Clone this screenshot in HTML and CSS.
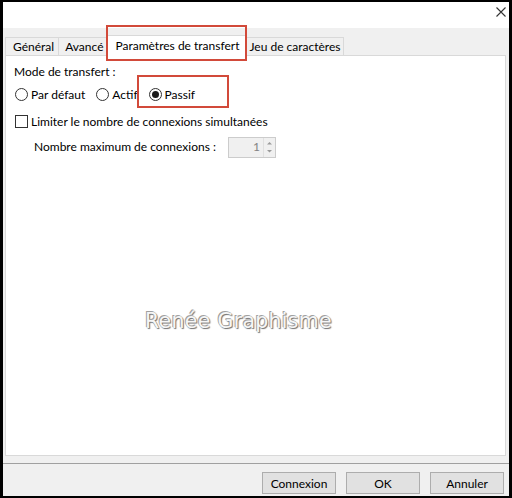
FILE: index.html
```html
<!DOCTYPE html>
<html lang="fr">
<head>
<meta charset="utf-8">
<title>Paramètres de transfert</title>
<link rel="stylesheet" href="styles.css">
</head>
<body>
<div class="window">
  <div class="titlebar">
    <svg class="close" width="10" height="10" viewBox="0 0 10 10"><path d="M0.5 0.5 L9.5 9.5 M9.5 0.5 L0.5 9.5" stroke="#333" stroke-width="1.1" fill="none"/></svg>
  </div>
  <div class="main">
    <div class="tabs">
      <div class="tab tab-first">Général</div>
      <div class="tab tab-mid">Avancé</div>
      <div class="tab tab-active">Paramètres de transfert</div>
      <div class="tab tab-last">Jeu de caractères</div>
    </div>
    <div class="panel">
      <div class="label">Mode de transfert :</div>
      <div class="radios">
        <label class="radio"><span class="circle"></span>Par défaut</label>
        <label class="radio"><span class="circle"></span>Actif</label>
        <label class="radio"><span class="circle checked"></span>Passif</label>
      </div>
      <label class="check"><span class="box"></span>Limiter le nombre de connexions simultanées</label>
      <div class="maxrow">
        <span>Nombre maximum de connexions :</span>
        <div class="spin">
          <span class="spin-val">1</span>
          <span class="spin-btns">
            <svg width="11" height="18" viewBox="0 0 11 18"><path d="M3 6.5 L5.5 4 L8 6.5 Z" fill="#9a9a9a"/><path d="M3 12 L5.5 14.5 L8 12 Z" fill="#9a9a9a"/></svg>
          </span>
        </div>
      </div>
      <div class="watermark">Renée Graphisme</div>
    </div>
  </div>
  <div class="footer">
    <button class="btn">Connexion</button>
    <button class="btn">OK</button>
    <button class="btn">Annuler</button>
  </div>
  <div class="mark mark-tab"></div>
  <div class="mark mark-radio"></div>
</div>
</body>
</html>
```
FILE: styles.css
```css
* { box-sizing: border-box; }
html, body { margin: 0; padding: 0; background: #000; }
body { font-family: Lato, "Noto Sans", sans-serif; font-size: 12px; color: #000; }

.window {
  position: relative;
  width: 512px;
  height: 498px;
  border-style: solid;
  border-color: #000;
  border-width: 2px 3px 2px 3px;
  background: #f0f0f0;
  display: flex;
  flex-direction: column;
}

.titlebar {
  height: 26px;
  background: #fff;
  display: flex;
  justify-content: flex-end;
  align-items: flex-start;
  padding: 5px 3px 0 0;
  flex: none;
}

.main {
  flex: 1;
  display: flex;
  flex-direction: column;
  padding: 7px 3px 7px 2px;
}

.tabs {
  display: flex;
  height: 20px;
  flex: none;
}

.tab {
  height: 19px;
  margin-top: 2px;
  padding: 0 4px 0 5px;
  border: 1px solid #d9d9d9;
  border-bottom: none;
  border-left: none;
  background: #f0f0f0;
  line-height: 17px;
  white-space: nowrap;
}
.tab-first { border-left: 1px solid #d9d9d9; padding-left: 7px; }
.tab-mid { padding: 0 5px 0 6px; }
.tab-last { padding: 0 3px 0 4px; }

.tab-active {
  position: relative;
  z-index: 2;
  margin: 0 -2px;
  height: 22px;
  padding: 0 7px 0 7px;
  border-left: 1px solid #d9d9d9;
  background: #fff;
  line-height: 20px;
}

.panel {
  position: relative;
  flex: 1;
  background: #fff;
  border: 1px solid #d9d9d9;
  padding: 8px 8px 0 8px;
}

.label { line-height: 16px; }

.radios {
  display: flex;
  margin-top: 6px;
  height: 16px;
  align-items: center;
}
.radio {
  display: flex;
  align-items: center;
  margin-right: 10px;
  white-space: nowrap;
}
.circle {
  width: 13px;
  height: 13px;
  border: 1px solid #333;
  border-radius: 50%;
  margin: 0 3px 0 1px;
  display: flex;
  align-items: center;
  justify-content: center;
}
.circle.checked::after {
  content: "";
  width: 7px;
  height: 7px;
  border-radius: 50%;
  background: #1a1a1a;
}

.check {
  display: flex;
  align-items: center;
  height: 16px;
  margin-top: 11px;
}
.box {
  width: 13px;
  height: 13px;
  border: 1px solid #333;
  margin: 0 3px 0 1px;
}

.maxrow {
  display: flex;
  align-items: center;
  margin-top: 8px;
  padding-left: 20px;
  gap: 12px;
  height: 20px;
}
.maxrow span:first-child { position: relative; top: -1px; }

.spin {
  width: 48px;
  height: 21px;
  border: 1px solid #cccccc;
  background: #f0f0f0;
  display: flex;
  align-items: center;
  justify-content: flex-end;
}
.spin-val { color: #838383; padding-right: 3px; }
.spin-btns {
  width: 12px;
  height: 19px;
  border-left: 1px solid #e0e0e0;
  display: flex;
  align-items: center;
}

.watermark {
  position: absolute;
  left: 139px;
  top: 253px;
  white-space: nowrap;
  font-family: "DejaVu Sans", Verdana, sans-serif;
  font-size: 20.5px;
  color: #f6f6f6;
  text-shadow: -1px -1px 0 #a0a0a0, 1px 1px 1px #6f6f6f, 0 0 1px #888;
  letter-spacing: 0.3px;
}

.footer {
  height: 33px;
  flex: none;
  border-top: 1px solid #a0a0a0;
  display: flex;
  justify-content: flex-end;
  gap: 10px;
  padding: 8px 5px 0 0;
}

.btn {
  width: 74px;
  height: 22px;
  border: 1px solid #adadad;
  background: #e1e1e1;
  font-family: Lato, "Noto Sans", sans-serif;
  font-size: 12px;
  color: #000;
  padding: 0;
}

.mark {
  position: absolute;
  border: 2px solid #d24a3a;
  z-index: 5;
}
.mark-tab { left: 103px; top: 23px; width: 141px; height: 36px; }
.mark-radio { left: 134px; top: 73px; width: 92px; height: 33px; }
```
